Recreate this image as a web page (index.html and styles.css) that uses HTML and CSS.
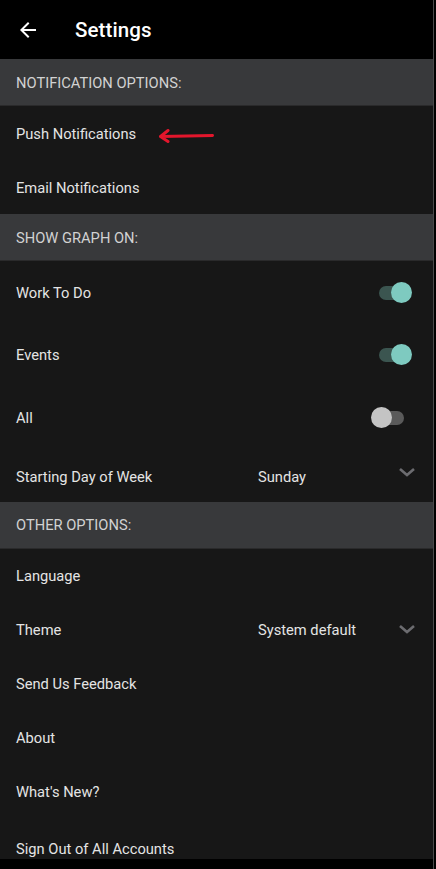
FILE: index.html
```html
<!DOCTYPE html>
<html lang="en">
<head>
  <meta charset="UTF-8">
  <title>Settings</title>
  <meta name="viewport" content="width=device-width, initial-scale=1.0">
  <link rel="stylesheet" href="styles.css">
</head>
<body>
  <div class="screen">
    <header class="appbar">
      <svg class="back" width="24" height="24" viewBox="0 0 24 24">
        <path d="M20 11H7.83l5.59-5.59L12 4l-8 8 8 8 1.41-1.41L7.83 13H20v-2z" fill="#fff"/>
      </svg>
      <h1>Settings</h1>
    </header>

    <main class="list">
      <div class="section">NOTIFICATION OPTIONS:</div>
      <div class="row">
        <span class="label">Push Notifications</span>
        <svg class="pointer" width="58" height="14" viewBox="0 0 58 14">
          <path d="M55.5 6.5 L4 7.5 M11 1.5 L3.5 7.5 L11 12.5" fill="none" stroke="#e3162c" stroke-width="3" stroke-linecap="round" stroke-linejoin="round"/>
        </svg>
      </div>
      <div class="row">
        <span class="label">Email Notifications</span>
      </div>

      <div class="section">SHOW GRAPH ON:</div>
      <div class="row tall">
        <span class="label">Work To Do</span>
        <span class="switch on"></span>
      </div>
      <div class="row tall">
        <span class="label">Events</span>
        <span class="switch on"></span>
      </div>
      <div class="row tall">
        <span class="label">All</span>
        <span class="switch"></span>
      </div>
      <div class="row short">
        <span class="label">Starting Day of Week</span>
        <span class="value">Sunday</span>
        <svg class="chevron" width="18" height="10" viewBox="0 0 18 10">
          <path d="M2 2 L9 8 L16 2" fill="none" stroke="#6c6c70" stroke-width="2.6"/>
        </svg>
      </div>

      <div class="section">OTHER OPTIONS:</div>
      <div class="row">
        <span class="label">Language</span>
      </div>
      <div class="row">
        <span class="label">Theme</span>
        <span class="value">System default</span>
        <svg class="chevron" width="18" height="10" viewBox="0 0 18 10">
          <path d="M2 2 L9 8 L16 2" fill="none" stroke="#6c6c70" stroke-width="2.6"/>
        </svg>
      </div>
      <div class="row">
        <span class="label">Send Us Feedback</span>
      </div>
      <div class="row">
        <span class="label">About</span>
      </div>
      <div class="row">
        <span class="label">What's New?</span>
      </div>
      <div class="row last">
        <span class="label">Sign Out of All Accounts</span>
      </div>
    </main>

    <div class="navbar"></div>
  </div>
</body>
</html>
```

FILE: styles.css
```css
:root {
  --bg: #171717;
  --section: #38393b;
  --text: #e4e4e4;
  --muted: #d2d2d2;
  --accent: #7ecac0;
  --accent-track: #3b5550;
}

html, body {
  margin: 0;
  padding: 0;
  background: #000;
}

body {
  font-family: Roboto, 'Noto Sans', sans-serif;
  color: var(--text);
}

.screen {
  width: 433px;
  height: 869px;
  display: flex;
  flex-direction: column;
  overflow: hidden;
  border-right: 1px solid #4a4a4a;
}

.appbar {
  height: 59px;
  flex: none;
  display: flex;
  align-items: center;
  background: #000;
  padding-left: 16px;
}

.appbar .back {
  margin-top: 1px;
}

.appbar h1 {
  margin: 0 0 0 35px;
  font-size: 20.5px;
  font-weight: 500;
  color: #fff;
  letter-spacing: 0.1px;
}

.list {
  flex: 1;
  display: flex;
  flex-direction: column;
  background: var(--bg);
  overflow: hidden;
}

.section {
  height: 47px;
  flex: none;
  display: flex;
  align-items: center;
  padding: 1px 0 0 16px;
  background: var(--section);
  color: var(--muted);
  font-size: 14.7px;
  border-bottom: 1px solid #2a2a2b;
  box-sizing: border-box;
}

.row {
  height: 54px;
  flex: none;
  display: flex;
  align-items: center;
  padding: 1px 20px 0 16px;
  font-size: 14.7px;
  position: relative;
  box-sizing: border-box;
}

.row.tall {
  height: 62.5px;
}

.row.short {
  height: 53px;
  align-items: flex-start;
  padding-top: 19px;
}

.row.last {
  align-items: flex-start;
  padding-top: 21px;
}

.label {
  flex: none;
}

.pointer {
  margin-left: 21px;
  margin-top: 4px;
}

.value {
  position: absolute;
  left: 258px;
}

.row.short .value {
  top: 19px;
}

.chevron {
  margin-left: auto;
  margin-right: -3px;
  margin-top: -2px;
}

.row.short .chevron {
  margin-top: -1px;
}

.switch {
  margin-left: auto;
  margin-right: 9px;
  position: relative;
  width: 23px;
  height: 14px;
  border-radius: 7px;
  background: #5a5a5a;
}

.switch::after {
  content: "";
  position: absolute;
  top: -4px;
  left: -10px;
  width: 21px;
  height: 21px;
  border-radius: 50%;
  background: #c4c4c4;
}

.switch.on {
  width: 26px;
  margin-right: 8px;
  background: var(--accent-track);
}

.switch.on::after {
  left: auto;
  right: -7px;
  background: var(--accent);
}

.navbar {
  height: 10px;
  flex: none;
  background: #000;
}
```
